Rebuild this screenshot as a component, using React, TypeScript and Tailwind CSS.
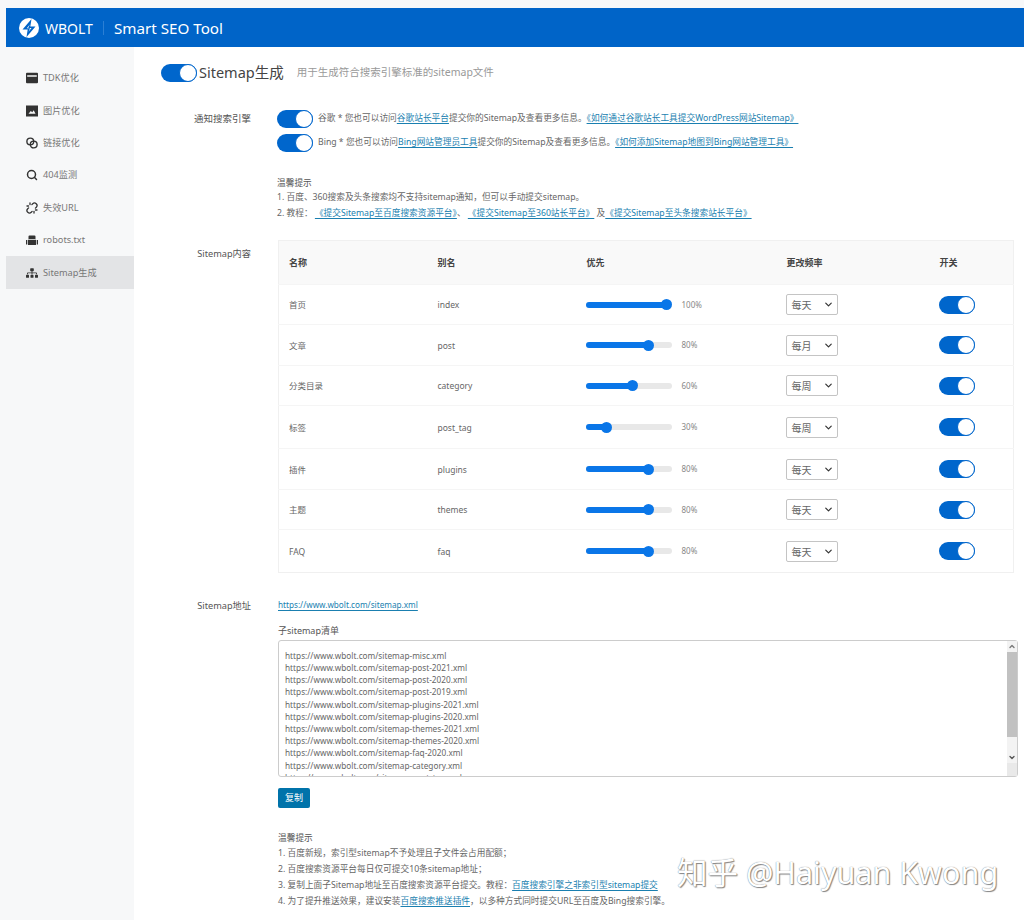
import { FaSitemap } from "react-icons/fa";
import { ChevronDown, ChevronUp, Search, Unlink } from "lucide-react";

const NAV = ["TDK优化", "图片优化", "链接优化", "404监测", "失效URL", "robots.txt", "Sitemap生成"];

const ROWS = [
  { name: "首页", alias: "index", pct: 100, knob: 81, freq: "每天", h: "h-[40px]" },
  { name: "文章", alias: "post", pct: 80, knob: 63, freq: "每月", h: "h-[41px]" },
  { name: "分类目录", alias: "category", pct: 60, knob: 47, freq: "每周", h: "h-[40px]" },
  { name: "标签", alias: "post_tag", pct: 30, knob: 21, freq: "每周", h: "h-[43px]" },
  { name: "插件", alias: "plugins", pct: 80, knob: 63, freq: "每天", h: "h-[41px]" },
  { name: "主题", alias: "themes", pct: 80, knob: 63, freq: "每天", h: "h-[40px]" },
  { name: "FAQ", alias: "faq", pct: 80, knob: 63, freq: "每天", h: "h-[43px]" },
];

const SITEMAPS = [
  "sitemap-misc", "sitemap-post-2021", "sitemap-post-2020", "sitemap-post-2019",
  "sitemap-plugins-2021", "sitemap-plugins-2020", "sitemap-themes-2021", "sitemap-themes-2020",
  "sitemap-faq-2020", "sitemap-category", "sitemap-post_tag", "sitemap-pages",
  "sitemap-authors", "sitemap-archives",
];

function NavIcon({ index }: { index: number }) {
  const cls = "w-[12px] h-[12px] text-[#333]";
  if (index === 0) {
    return (
      <svg viewBox="0 0 12 12" className={cls}>
        <path d="M1 .8h10a1 1 0 0 1 1 1v8.400a1 1 0 0 1-1 1H1a1 1 0 0 1-1-1V1.800a1 1 0 0 1 1-1zM1.200 3.200v1.600h9.600V3.200z" fill="currentColor" fillRule="evenodd" />
      </svg>
    );
  }
  if (index === 1) {
    return (
      <svg viewBox="0 0 12 12" className={cls}>
        <path d="M0 .5h12v11H0zM2.500 8.800h7L7.700 5.200 6.300 7.200 4.800 5.900z" fill="currentColor" fillRule="evenodd" />
      </svg>
    );
  }
  if (index === 2) {
    return (
      <svg viewBox="0 0 12 12" className={cls} fill="none" stroke="currentColor" strokeWidth="1.400">
        <circle cx="4.300" cy="4.500" r="3.400" />
        <circle cx="7.700" cy="7.500" r="3.400" />
      </svg>
    );
  }
  if (index === 3) return <Search className={cls} strokeWidth={3} />;
  if (index === 4) return <Unlink className={cls} strokeWidth={2.6} />;
  if (index === 5) {
    return (
      <svg viewBox="0 0 12 12" className={cls}>
        <path d="M3.500 1.500h5a1 1 0 0 1 1 1V5h-7V2.500a1 1 0 0 1 1-1zM2 5.800h8V11H2zM0 6h1.300v4.500H0zM10.700 6H12v4.500h-1.300z" fill="currentColor" />
      </svg>
    );
  }
  return <FaSitemap className={cls} />;
}

function Toggle() {
  return (
    <div className="flex w-[36px] h-[18px] shrink-0 justify-end rounded-full bg-[#0066cc]">
      <div className="w-[18px] h-[18px] rounded-full bg-white border border-[#0066cc]" />
    </div>
  );
}

function A({ children }: { children: React.ReactNode }) {
  return <a className="text-[#1a7fb0] underline underline-offset-2">{children}</a>;
}

function Slider({ pct, knob }: { pct: number; knob: number }) {
  return (
    <div className="flex items-center gap-[10px]">
      <div className="relative w-[86px] h-[6px] rounded-full bg-[#e8e8e8]">
        <div className="h-full rounded-full bg-[#0a76e8]" style={{ width: knob }} />
        <div className="absolute top-[-2.500px] w-[11px] h-[11px] rounded-full bg-[#0a76e8]" style={{ left: knob - 5.5 }} />
      </div>
      <span className="text-[8px] text-[#888]">{pct}%</span>
    </div>
  );
}

function FreqSelect({ value }: { value: string }) {
  return (
    <div className="flex items-center justify-between w-[52px] h-[21px] pl-[5px] pr-[3px] border border-[#c4c4c4] rounded-[2px] bg-white text-[10px] text-[#666]">
      <span className="mt-[2px]">{value}</span>
      <ChevronDown className="w-[11px] h-[11px] text-[#333]" strokeWidth={2.6} />
    </div>
  );
}

export default function App() {
  return (
    <div className="w-[1024px] h-[920px] overflow-hidden relative bg-[#f7f8f9] pt-[8px] pl-[6px] font-['Noto_Sans','Noto_Sans_CJK_SC',sans-serif] text-[#666]">
      {/* 顶栏 */}
      <header className="flex items-center h-[39px] bg-[#0064c8] text-white pl-[13px] pt-[1px]">
        <svg viewBox="0 0 20 20" className="w-[20px] h-[20px]">
          <circle cx="10" cy="10" r="10" fill="#fff" />
          <path d="M12.500 1 3.500 11.500h5.200L7.500 19 16.500 8.500h-5.200z" fill="#0064c8" />
          <path d="M10.800 6.500 7.800 10.300h3.300l-1.600 3.500 3-3.900H9.200z" fill="#fff" />
        </svg>
        <span className="ml-[6px] text-[14px]">WBOLT</span>
        <span className="mx-[10px] w-px h-[14px] bg-[#2b7fd4]" />
        <span className="text-[15.200px]">Smart SEO Tool</span>
      </header>

      <div className="flex h-[873px]">
        {/* 侧边栏 */}
        <aside className="w-[128px] shrink-0 pt-[15px]">
          {NAV.map((label, i) => (
            <div
              key={label}
              className={`flex items-center h-[32.400px] pl-[20px] gap-[5px] text-[9.200px] text-[#777] ${i === 6 ? "bg-[#e3e4e6]" : ""}`}
            >
              <NavIcon index={i} />
              <span>{label}</span>
            </div>
          ))}
        </aside>

        {/* 主内容 */}
        <main className="flex-1 bg-white pl-[27px] pr-[10px]">
          <div className="flex items-center h-[26px] mt-[13px]">
            <Toggle />
            <span className="ml-[2px] text-[14.500px] text-[#444]">Sitemap生成</span>
            <span className="ml-[13px] text-[10.500px] text-[#999]">用于生成符合搜索引擎标准的sitemap文件</span>
          </div>

          <section className="flex mt-[24px]">
            <div className="w-[90px] shrink-0 text-right text-[9.500px] text-[#555] leading-[18px]">通知搜索引擎</div>
            <div className="ml-[26px] text-[8.700px]">
              <div className="flex flex-col gap-[6px]">
                <div className="flex items-center gap-[5px]">
                  <Toggle />
                  <span>谷歌 * 您也可以访问<A>谷歌站长平台</A>提交你的Sitemap及查看更多信息。<A>《如何通过谷歌站长工具提交WordPress网站Sitemap》</A></span>
                </div>
                <div className="flex items-center gap-[5px]">
                  <Toggle />
                  <span>Bing * 您也可以访问<A>Bing网站管理员工具</A>提交你的Sitemap及查看更多信息。<A>《如何添加Sitemap地图到Bing网站管理工具》</A></span>
                </div>
              </div>
              <div className="mt-[24px] leading-[15px]">
                <div className="text-[#555] leading-[14px]">温馨提示</div>
                <div>1. 百度、360搜索及头条搜索均不支持sitemap通知，但可以手动提交sitemap。</div>
                <div className="mt-[1px]">2. 教程：&nbsp;<A>《提交Sitemap至百度搜索资源平台》</A>、&nbsp;<A>《提交Sitemap至360站长平台》</A>&nbsp;及<A>《提交Sitemap至头条搜索站长平台》</A></div>
              </div>
            </div>
          </section>

          <section className="flex mt-[19px]">
            <div className="w-[90px] shrink-0 text-right text-[9.200px] text-[#555] leading-[28px]">Sitemap内容</div>
            <table className="ml-[27px] w-[736px] table-fixed border border-[#f0f0f0] text-[8.500px] text-left">
              <colgroup>
                <col className="w-[149px]" />
                <col className="w-[149px]" />
                <col className="w-[200px]" />
                <col className="w-[153px]" />
                <col />
              </colgroup>
              <thead className="bg-[#f9f9f9] text-[#444] font-bold">
                <tr className="h-[44px]">
                  {["名称", "别名", "优先", "更改频率", "开关"].map((h) => (
                    <th key={h} className="pl-[10px] font-bold text-[9px]">{h}</th>
                  ))}
                </tr>
              </thead>
              <tbody>
                {ROWS.map((r) => (
                  <tr key={r.name} className={`${r.h} border-t border-[#f5f5f5]`}>
                    <td className="pl-[10px] pt-[2px]">{r.name}</td>
                    <td className="pl-[10px] pt-[2px]">{r.alias}</td>
                    <td className="pl-[9px]"><Slider pct={r.pct} knob={r.knob} /></td>
                    <td className="pl-[9px]"><FreqSelect value={r.freq} /></td>
                    <td className="pl-[9px]"><Toggle /></td>
                  </tr>
                ))}
              </tbody>
            </table>
          </section>

          <section className="flex mt-[26px]">
            <div className="w-[90px] shrink-0 text-right text-[9.200px] text-[#555] leading-[14px]">Sitemap地址</div>
            <div className="ml-[27px] flex-1 text-[8.200px]">
              <A>https://www.wbolt.com/sitemap.xml</A>
              <div className="mt-[13px] text-[#555] text-[9px]">子sitemap清单</div>
              <div className="relative mt-[2px] w-[740px] h-[137px]">
                <textarea
                  readOnly
                  value={SITEMAPS.map((s) => `https://www.wbolt.com/${s}.xml`).join("\n")}
                  className="block w-full h-full px-[6px] py-[9px] border border-[#ccc] rounded-[3px] text-[8.250px] leading-[12.200px] text-[#666] resize-none outline-none"
                />
                {/* 滚动条 */}
                <div className="absolute right-[1px] top-[1px] bottom-[1px] w-[10px] flex flex-col items-center bg-[#f3f3f3]">
                  <ChevronUp className="w-[8px] h-[11px] shrink-0 text-[#777]" strokeWidth={4} />
                  <div className="w-full h-[85px] bg-[#c1c1c1]" />
                  <div className="flex-1" />
                  <ChevronDown className="w-[8px] h-[11px] shrink-0 text-[#555]" strokeWidth={4} />
                  <div className="w-full h-[13px] bg-[#e9e9e9]" />
                </div>
              </div>
              <button className="block mt-[11px] w-[32px] h-[20px] rounded-[2px] bg-[#0073aa] text-white text-[9px]">复制</button>
              <div className="mt-[23px] leading-[16px] text-[8.700px]">
                <div className="text-[#555] leading-[14px]">温馨提示</div>
                <div>1. 百度新规，索引型sitemap不予处理且子文件会占用配额；</div>
                <div>2. 百度搜索资源平台每日仅可提交10条sitemap地址；</div>
                <div>3. 复制上面子Sitemap地址至百度搜索资源平台提交。教程：<A>百度搜索引擎之非索引型sitemap提交</A></div>
                <div>4. 为了提升推送效果，建议安装<A>百度搜索推送插件</A>，以多种方式同时提交URL至百度及Bing搜索引擎。</div>
              </div>
            </div>
          </section>
        </main>
      </div>

      {/* 水印 */}
      <div className="absolute left-[677px] top-[852px] text-[30.500px] leading-[40px] whitespace-nowrap text-white [text-shadow:0_0_1px_#666,1px_1px_1px_#888]">
        知乎 @Haiyuan Kwong
      </div>
    </div>
  );
}
